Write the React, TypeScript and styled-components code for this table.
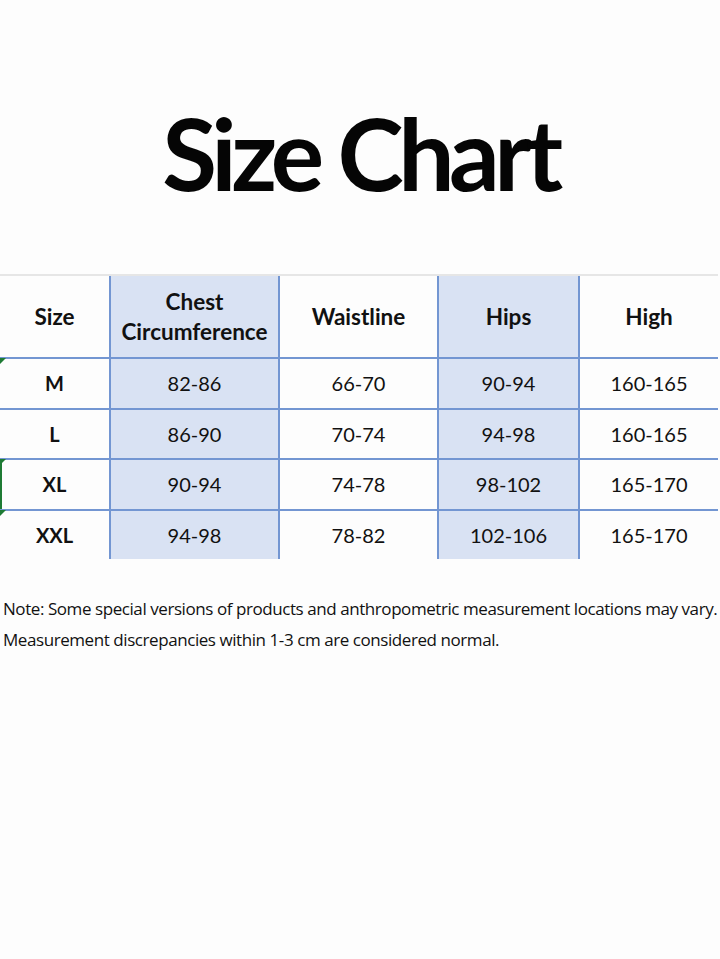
import styled, { createGlobalStyle } from 'styled-components';

const GlobalStyle = createGlobalStyle`
  html, body {
    margin: 0;
    padding: 0;
    background: #fdfdfd;
  }
  body {
    font-family: Lato, "Open Sans", sans-serif;
    color: #111;
  }
`;

const Page = styled.div`
  width: 720px;
  height: 959px;
  display: flex;
  flex-direction: column;
`;

const Title = styled.h1`
  margin: 0;
  padding-top: 102px;
  height: 274px;
  box-sizing: border-box;
  text-align: center;
  font-family: Lato, sans-serif;
  font-weight: 700;
  font-size: 100px;
  line-height: 100px;
  letter-spacing: -5.5px;
  color: #050505;
`;

const ChartWrap = styled.div`
  border-top: 2px solid #e6e6e6;
  width: 718px;
`;

const Table = styled.table`
  width: 718px;
  border-collapse: collapse;
  table-layout: fixed;
  font-family: Lato, sans-serif;
`;

const Cell = styled.td<{ $shade?: boolean; $head?: boolean; $mark?: 'top' | 'line' }>`
  position: relative;
  padding: 0;
  height: ${(p) => (p.$head ? '81px' : '48.5px')};
  text-align: center;
  vertical-align: middle;
  background: ${(p) => (p.$shade ? '#d9e2f3' : 'transparent')};
  border-left: 2px solid #7396d2;
  border-top: ${(p) => (p.$head ? 'none' : '2px solid #7396d2')};
  font-size: ${(p) => (p.$head ? '22.5px' : '20px')};
  font-weight: ${(p) => (p.$head ? 700 : 400)};
  line-height: 30px;
  color: #111;

  &:first-child {
    border-left: none;
    font-weight: 700;
  }

  &::before {
    content: '';
    display: ${(p) => (p.$mark ? 'block' : 'none')};
    position: absolute;
    left: 0;
    top: -1px;
    width: 0;
    height: 0;
    border-top: 6px solid #1e7b34;
    border-right: 6px solid transparent;
  }

  &::after {
    content: '';
    display: ${(p) => (p.$mark === 'line' ? 'block' : 'none')};
    position: absolute;
    left: 0;
    top: 0;
    bottom: 0;
    width: 2px;
    background: #1e7b34;
  }
`;

const Note = styled.div`
  padding: 34px 0 0 3px;
  font-family: "Open Sans", sans-serif;
  font-size: 17px;
  letter-spacing: -0.43px;
  line-height: 31px;
  color: #111;
  white-space: nowrap;
`;

const columns = [110, 169, 159, 141, 139];
const shaded = [false, true, false, true, false];

const header = ['Size', 'Chest Circumference', 'Waistline', 'Hips', 'High'];

const rows: { cells: string[]; mark?: 'top' | 'line' }[] = [
  { cells: ['M', '82-86', '66-70', '90-94', '160-165'], mark: 'top' },
  { cells: ['L', '86-90', '70-74', '94-98', '160-165'] },
  { cells: ['XL', '90-94', '74-78', '98-102', '165-170'], mark: 'line' },
  { cells: ['XXL', '94-98', '78-82', '102-106', '165-170'], mark: 'top' },
];

export default function App() {
  return (
    <Page>
      <GlobalStyle />
      <Title>Size Chart</Title>
      <ChartWrap>
        <Table>
          <colgroup>
            {columns.map((w, i) => (
              <col key={i} style={{ width: w }} />
            ))}
          </colgroup>
          <thead>
            <tr>
              {header.map((h, i) => (
                <Cell as="th" key={h} $head $shade={shaded[i]}>
                  {h === 'Chest Circumference' ? (
                    <>
                      Chest
                      <br />
                      Circumference
                    </>
                  ) : (
                    h
                  )}
                </Cell>
              ))}
            </tr>
          </thead>
          <tbody>
            {rows.map((r) => (
              <tr key={r.cells[0]}>
                {r.cells.map((c, i) => (
                  <Cell key={i} $shade={shaded[i]} $mark={i === 0 ? r.mark : undefined}>
                    {c}
                  </Cell>
                ))}
              </tr>
            ))}
          </tbody>
        </Table>
      </ChartWrap>
      <Note>
        Note: Some special versions of products and anthropometric measurement locations may vary.
        <br />
        Measurement discrepancies within 1-3 cm are considered normal.
      </Note>
    </Page>
  );
}
